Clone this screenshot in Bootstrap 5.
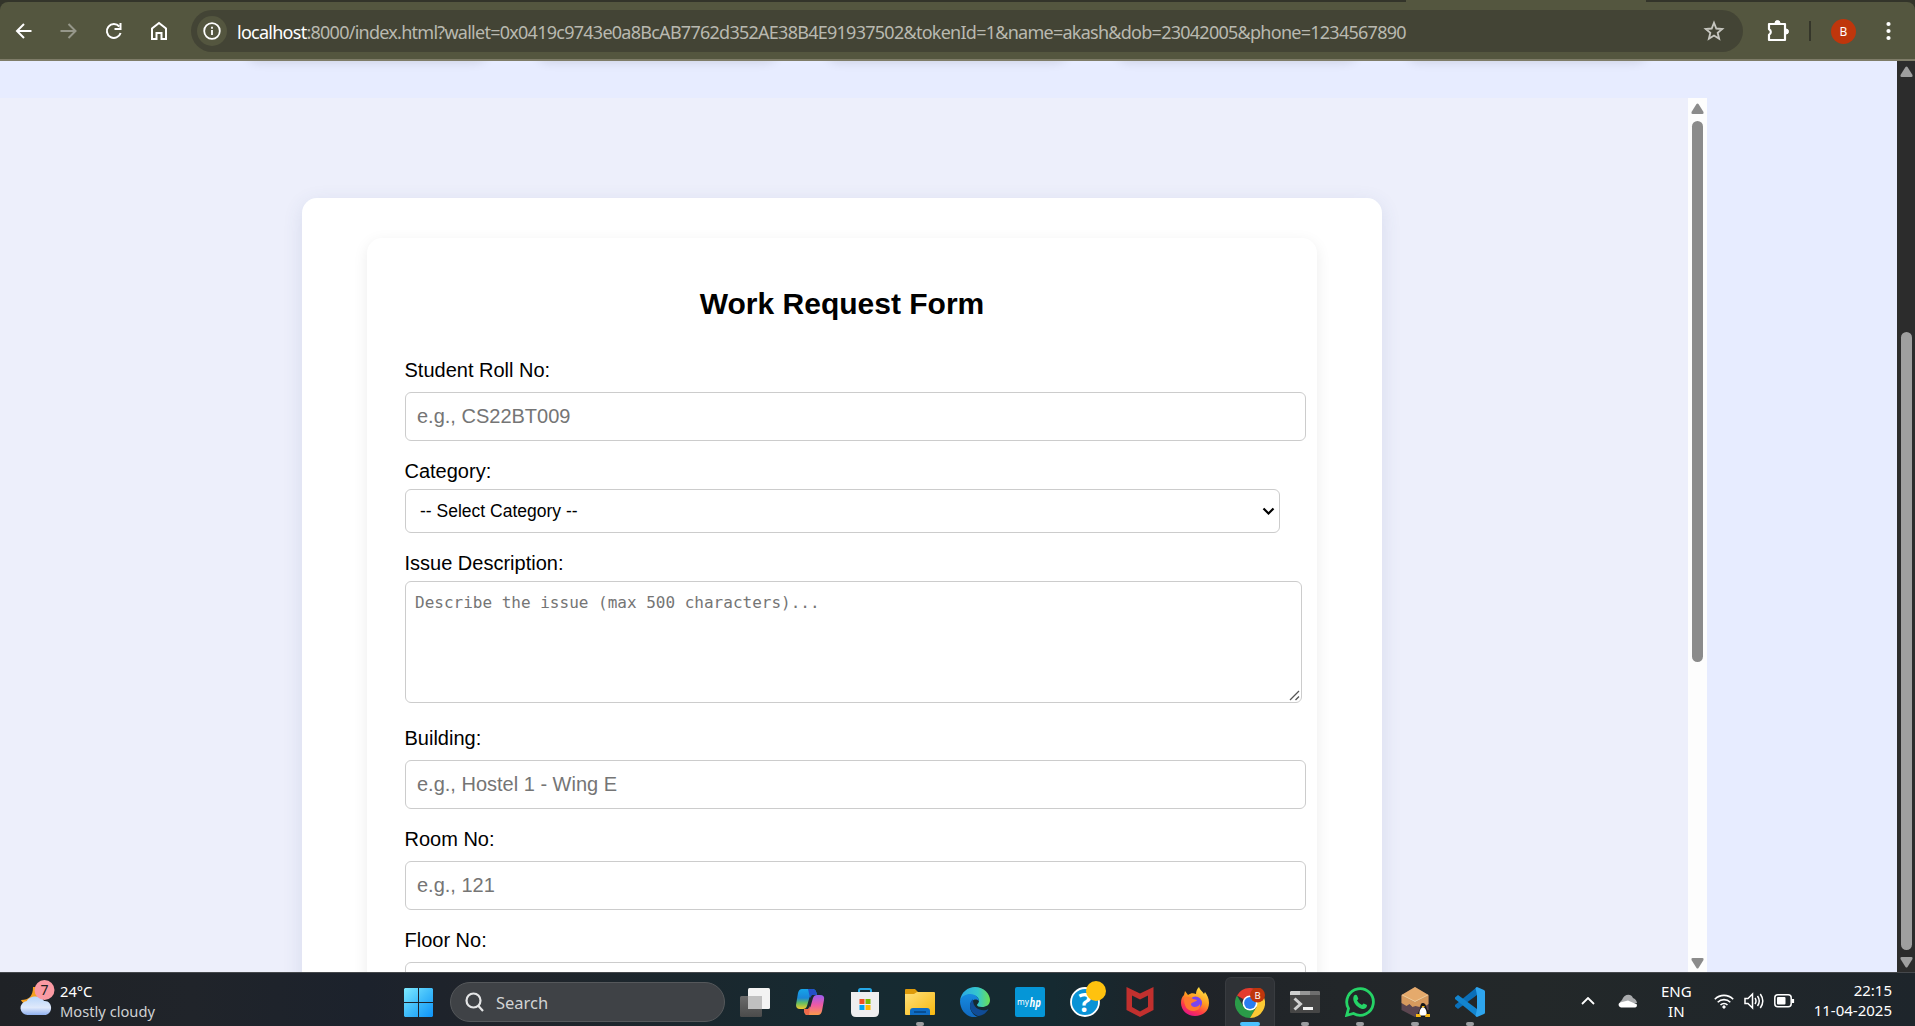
<!DOCTYPE html>
<html lang="en">
<head>
<meta charset="utf-8">
<title>Work Request Form</title>
<link href="https://cdn.jsdelivr.net/npm/bootstrap@5.3.0/dist/css/bootstrap.min.css" rel="stylesheet">
<script src="https://cdn.jsdelivr.net/npm/bootstrap@5.3.0/dist/js/bootstrap.bundle.min.js"></script>
<style>
html,body{height:100%;overflow:hidden}
body{font-family:"Liberation Sans",Arial,sans-serif;font-size:20px;line-height:23px;color:#000;background:#e7ecff}
svg{display:block;flex:none}
.ui-font{font-family:"Noto Sans","Open Sans",sans-serif}
/* browser chrome */
.tab-edge{height:2px;background:#33342a}
.tab-live{height:2px;width:240px;margin-left:1406px;background:#54563f}
.toolbar{height:59px;background:#54563f;border-bottom:2px solid #7e7c68;padding:7px 14px 6px 14px}
.strip{background:#33342a}
.toolbar-wrap{border-radius:8px 8px 0 0;overflow:hidden}
.nav-gap{margin-left:25px}
.omnibox{width:1552px;height:42px;border-radius:21px;background:#434435;margin-left:22px;padding:0 18px 0 6px}
.info-dot{width:30px;height:30px;background:#54563f}
.url{font-size:18px;letter-spacing:-.74px;color:#b9b9b0;margin-left:10px;white-space:nowrap;line-height:30px;padding-top:1px}
.url b{font-weight:400;color:#fff}
.sep{width:2px;height:20px;background:#35362a;margin-left:19px}
.avatar{width:25px;height:25px;background:#bf360c;color:#fff;font-size:12px;margin-left:20px}
/* page */
.viewport-area{height:911px}
.page-body{width:1897px}
.band{height:37px;overflow:hidden;padding-left:247px;gap:50px}
.tile{width:240px;height:30px;margin-top:-35px;background:#fff;border-radius:12px;box-shadow:0 5px 12px rgba(0,0,0,.14);flex:none}
.frame{width:1688px;height:874px;overflow:hidden;background:#edeffb}
.outer-card{width:1080px;height:900px;margin:100px 0 0 302px;padding:40px 65px;background:#fff;border-radius:15px;box-shadow:0 5px 20px rgba(60,80,130,.12)}
.inner-card{height:900px;background:#fff;border-radius:15px;padding:49px 11px 0 38px;box-shadow:0 4px 15px rgba(0,0,0,.08)}
.form-title{font-size:30px;line-height:34px;font-weight:700;margin:0 27px 38px 0}
.fld-label{display:block;height:23px;margin:0;text-indent:-.5px}
.fld{border:1px solid #ccc;border-radius:6px;font-size:20px;line-height:23px;color:#000;background:#fff;display:block;padding:12px}
.fld::placeholder{color:#757575;opacity:1}
.in-text{width:901px;height:49px;margin:10px 0 19px;padding-left:11px}
.in-select{width:875px;height:44px;margin:6px 0 19px;padding:0 4px 0 14px;font-size:17.5px}
.area-wrap{width:897px;margin:6px 0 24px}
.in-area{width:897px;height:122px;padding:11px 9px;font-family:"DejaVu Sans Mono",monospace;font-size:16px;line-height:20px;resize:none}
.grip{right:2px;bottom:2px}
.rail{background:#fdfdfd;width:19px;height:874px;padding:5px 0 3px}
.rail-thumb{width:11px;border-radius:6px;background:#8b8b8b}
.rail-main{background:#2c2c2c;width:18px;height:911px;padding:5px 0 4px}
.rail-main .rail-thumb{background:#9f9f9f;height:618px;margin-top:255px}
.rail .rail-thumb{height:541px;margin-top:7px}
/* taskbar */
.taskbar{height:54px;border-top:1px solid #45484c;background:linear-gradient(90deg,#1f2226 0,#20242a 10%,#1c222c 19%,#20242a 27%,#162a31 44%,#152a31 55%,#1f2328 62%,#222629 70%,#232829 80%,#1e252b 100%);color:#fff;font-size:15px;line-height:20px}
.weather{width:404px;padding-left:19px}
.weather-text{margin-left:5px;padding-top:8px;font-size:14.7px}
.dim{color:#cfd1d3}
.search-pill{width:275px;height:40px;margin:9px 0 0 17px;border-radius:20px;background:#3f4246;border:1px solid #55585b;padding-left:14px;font-size:16.500px;color:#d2d3d4}
.search-pill span{margin-left:12px;padding-top:1px}
.task{width:55px;height:53px;padding-top:14px}
.task i{display:block;width:8px;height:4px;border-radius:2px;background:#9b9da0;margin-top:5px}
.task-on{width:50px;height:49px;margin:4px 2.5px 0;padding-top:10px;background:#2f3236;border:1px solid #393c40;border-bottom:0;border-radius:6px 6px 0 0}
.task-on i{width:20px;background:#4cc2ff;margin-top:4px}
.tray{margin-left:auto;padding:2px 23px 0 0}
.lang{margin:0 0 0 23px}
.clock{margin:-1px 0 0 19px}
</style>
</head>
<body>
<div class="strip">
 <div class="tab-edge"><div class="tab-live"></div></div>
 <div class="toolbar-wrap">
 <header class="toolbar d-flex align-items-center ui-font">
  <svg width="20" height="20" viewBox="0 0 20 20" fill="none" stroke="#fff" stroke-width="2"><path d="M17.500 10H3.500M10 3L3 10l7 7"/></svg>
  <svg class="nav-gap" width="20" height="20" viewBox="0 0 20 20" fill="none" stroke="#96978a" stroke-width="2"><path d="M1.500 10h14M9.500 3l7 7-7 7"/></svg>
  <svg class="nav-gap" width="20" height="20" viewBox="0 0 20 20" fill="none" stroke="#fff" stroke-width="2"><path d="M15.300 5.500A7 7 0 1 0 16.600 12"/><path d="M16.500 2v6h-6" /></svg>
  <svg class="nav-gap" width="20" height="20" viewBox="0 0 20 20" fill="none" stroke="#fff" stroke-width="2"><path d="M3 18V7.500L10 2l7 5.500V18h-4.500v-6h-5v6z"/></svg>
  <div class="omnibox d-flex align-items-center">
   <div class="info-dot rounded-circle d-flex align-items-center justify-content-center"><svg width="18" height="18" viewBox="0 0 18 18" fill="none" stroke="#fff" stroke-width="1.800"><circle cx="9" cy="9" r="7.800"/><path d="M9 8v5M9 4.800v2"/></svg></div>
   <div class="url"><b>localhost</b>:8000/index.html?wallet=0x0419c9743e0a8BcAB7762d352AE38B4E91937502&amp;tokenId=1&amp;name=akash&amp;dob=23042005&amp;phone=1234567890</div>
   <svg class="ms-auto" width="22" height="22" viewBox="0 0 24 24" fill="none" stroke="#c6c6bf" stroke-width="2"><path d="M12 3l2.500 6.300 6.500.5-5 4.200 1.600 6.500L12 17l-5.600 3.500L8 14 3 9.800l6.500-.5z"/></svg>
  </div>
  <svg style="margin-left:23px" width="24" height="24" viewBox="0 0 24 24" fill="none" stroke="#fff" stroke-width="2.200" stroke-linejoin="round"><path d="M3 5h16v16H3v-5.300a3 3 0 0 0 0-5.500z"/><path d="M9 4a2.500 2.500 0 0 1 5 0zM20 10a2.500 2.500 0 0 1 0 5z" fill="#fff" stroke-width="1"/></svg>
  <div class="sep"></div>
  <div class="avatar rounded-circle d-flex align-items-center justify-content-center">B</div>
  <svg style="margin-left:27px" width="12" height="22" fill="#fff"><circle cx="5.500" cy="4" r="2.100"/><circle cx="5.500" cy="11" r="2.100"/><circle cx="5.500" cy="18" r="2.100"/></svg>
 </header>
 </div>
</div>

<div class="viewport-area d-flex">
 <div class="page-body">
  <div class="band d-flex"><div class="tile"></div><div class="tile"></div><div class="tile"></div><div class="tile"></div><div class="tile"></div></div>
  <div class="d-flex">
   <div class="frame d-flex align-items-start">
    <main class="outer-card">
     <form class="inner-card">
      <h2 class="form-title text-center">Work Request Form</h2>
      <label class="fld-label">Student Roll No:</label>
      <input class="fld in-text" placeholder="e.g., CS22BT009">
      <label class="fld-label">Category:</label>
      <div class="fld in-select d-flex align-items-center justify-content-between"><span>-- Select Category --</span><svg width="13" height="10" fill="none" stroke="#000" stroke-width="2.200"><path d="M1.500 2.500l5 5 5-5"/></svg></div>
      <label class="fld-label">Issue Description:</label>
      <div class="area-wrap position-relative">
       <textarea class="fld in-area" placeholder="Describe the issue (max 500 characters)..."></textarea>
       <svg class="grip position-absolute" width="11" height="11" fill="none" stroke="#555" stroke-width="1.300"><path d="M1 10l9-9M6.500 10L10 6.500"/></svg>
      </div>
      <label class="fld-label">Building:</label>
      <input class="fld in-text" placeholder="e.g., Hostel 1 - Wing E">
      <label class="fld-label">Room No:</label>
      <input class="fld in-text" placeholder="e.g., 121">
      <label class="fld-label">Floor No:</label>
      <input class="fld in-text">
     </form>
    </main>
   </div>
   <div class="rail d-flex flex-column align-items-center">
    <svg width="13" height="11" fill="#8b8b8b"><path d="M5.500 1q1-1 2 0l5 8q.5 2-1 2h-10q-1.500 0-1-2z"/></svg>
    <div class="rail-thumb"></div>
    <svg class="mt-auto" width="13" height="11" fill="#8b8b8b"><path d="M5.500 10q1 1 2 0l5-8q.5-2-1-2h-10q-1.500 0-1 2z"/></svg>
   </div>
  </div>
 </div>
 <div class="rail-main d-flex flex-column align-items-center">
  <svg width="13" height="11" fill="#9f9f9f"><path d="M5.500 1q1-1 2 0l5 8q.5 2-1 2h-10q-1.500 0-1-2z"/></svg>
  <div class="rail-thumb"></div>
  <svg class="mt-auto" width="13" height="11" fill="#9f9f9f"><path d="M5.500 10q1 1 2 0l5-8q.5-2-1-2h-10q-1.500 0-1 2z"/></svg>
 </div>
</div>

<footer class="taskbar d-flex ui-font">
 <div class="weather d-flex">
  <svg width="36" height="44" viewBox="0 0 36 44">
   <defs><linearGradient id="cl" x2="0" y2="1"><stop stop-color="#b9d6fa"/><stop offset=".6" stop-color="#dfe9fb"/><stop offset="1" stop-color="#8fb0f0"/></linearGradient></defs>
   <path d="M14 14c0 9-4 13-12 13 2 5 12 8 18 3V14z" fill="#f5a01f"/>
   <path d="M9 42a7 7 0 0 1-1-14c1-5 14-7 17 0 9-1 10 14 0 14z" fill="url(#cl)"/>
   <circle cx="25.500" cy="17" r="10" fill="#fb9aa3"/><text x="25.500" y="22" font-size="14" text-anchor="middle" fill="#222">7</text>
  </svg>
  <div class="weather-text"><div>24°C</div><div class="dim">Mostly cloudy</div></div>
 </div>
 <svg style="margin-top:15px" width="29" height="29"><defs><linearGradient id="wn" x2="1" y2="1"><stop stop-color="#7eeaff"/><stop offset=".5" stop-color="#3fbcfa"/><stop offset="1" stop-color="#0e93f8"/></linearGradient></defs><path fill="url(#wn)" d="M1 0h13v14H0V1zM15 0h13l1 1v13H15zM0 15h14v14H1l-1-1zM15 15h14v13l-1 1H15z"/></svg>
 <div class="search-pill d-flex align-items-center">
  <svg width="19" height="20" fill="none" stroke="#e4e5e6" stroke-width="2.200"><circle cx="8.500" cy="8.500" r="7"/><path d="M13 13.500l5 5.500"/></svg><span>Search</span>
 </div>
 <div class="d-flex" style="margin-left:2px">
  <div class="task d-flex flex-column align-items-center"><svg width="30" height="30"><defs><linearGradient id="tv" x2="0" y2="1"><stop stop-color="#6b6b6b"/><stop offset="1" stop-color="#4b4b4b"/></linearGradient></defs><rect y="9" width="22" height="21" rx="1.500" fill="url(#tv)"/><rect x="8" y="1" width="22" height="21" rx="1.500" fill="#f3f3f3"/><path d="M8 9h14v13H8z" fill="#c0c0c0"/></svg></div>
  <div class="task d-flex flex-column align-items-center"><svg width="30" height="30" viewBox="0 0 30 30"><defs><linearGradient id="c1" x2="0" y2="1"><stop stop-color="#16a5e8"/><stop offset=".45" stop-color="#1a86d8"/><stop offset=".7" stop-color="#65bf60"/><stop offset="1" stop-color="#f3c92c"/></linearGradient><linearGradient id="c2" x2="0" y2="1"><stop stop-color="#9a5df0"/><stop offset=".5" stop-color="#ee5aa5"/><stop offset="1" stop-color="#fa9a4a"/></linearGradient></defs><path d="M7 2h11q3 0 4 6h-5q-2 0-3 4l-2 7q-1 3-4 3H5q-4 0-4-4l2-12q1-4 4-4z" fill="url(#c1)"/><path d="M23 28H12q-3 0-3-6h4q2 0 3-4l2-7q1-3 4-3h3q5 0 4 5l-2 11q-1 4-4 4z" fill="url(#c2)"/><path d="M13 2h5q3 0 4 6h-5l-2 3z" fill="#2450c8"/><path d="M9 22h4l2-3-1 9h-2q-3-1-3-6z" fill="#f06a4a"/></svg></div>
  <div class="task d-flex flex-column align-items-center"><svg width="30" height="30"><path d="M9 7V3.500Q9 2 10.500 2h9Q21 2 21 3.500V7" fill="none" stroke="#26a9e8" stroke-width="2"/><path d="M1 5h28v20q0 5-5 5H6q-5 0-5-5z" fill="#eeeeef"/><path d="M9.500 12h5v5h-5z" fill="#f04f22"/><path d="M15.500 12h5v5h-5z" fill="#7db900"/><path d="M9.500 18h5v5h-5z" fill="#00a3ee"/><path d="M15.500 18h5v5h-5z" fill="#ffb800"/></svg></div>
  <div class="task d-flex flex-column align-items-center"><svg width="30" height="30"><defs><linearGradient id="fd" x2="1" y2="1"><stop stop-color="#ffe07a"/><stop offset="1" stop-color="#f7b80f"/></linearGradient></defs><path d="M0 3q0-1 1-1h9l3 3-3 3H0z" fill="#dd9a0a"/><path d="M0 7h9l3-2h17q1 0 1 1v21q0 1-1 1H1q-1 0-1-1z" fill="url(#fd)"/><path d="M5 28v-4q0-3 3-3h14q3 0 3 3v4z" fill="#0f6cc4"/><path d="M9 25h12" stroke="#06427f" stroke-width="1.500"/></svg><i></i></div>
  <div class="task d-flex flex-column align-items-center"><svg width="30" height="30" viewBox="0 0 30 30"><defs><linearGradient id="e1"><stop stop-color="#2aa7e6"/><stop offset=".6" stop-color="#35c7cc"/><stop offset="1" stop-color="#6be053"/></linearGradient><linearGradient id="e2" x2="0" y2="1"><stop stop-color="#168be0"/><stop offset="1" stop-color="#1068c0"/></linearGradient></defs><path d="M0 14C1 5 8 0 15 0c9 0 15 7 15 13 0 5-4 7-8 7-3 0-5-1-5-2 0-1 2-2 2-4 0-4-4-6-8-6-5 0-9 2-11 6z" fill="url(#e1)"/><path d="M0 14c1-5 6-7 10-7 6 0 9 4 9 7-2-3-9-2-9 5 0 5 4 10 8 11C8 32 0 24 0 14z" fill="url(#e2)"/><path d="M13 12c-5 4-4 14 5 17 5 0 9-4 10.500-7-5 3-16 1-15.500-10z" fill="#104c96"/></svg></div>
  <div class="task d-flex flex-column align-items-center"><svg width="30" height="30" overflow="visible"><rect width="30" height="30" rx="2" fill="#0596d7"/><text x="2" y="18" font-size="8.500" fill="#fff" textLength="12" lengthAdjust="spacingAndGlyphs">my</text><text x="14.500" y="19.500" font-size="13" font-weight="700" font-style="italic" fill="#fff" textLength="11.500" lengthAdjust="spacingAndGlyphs">hp</text></svg></div>
  <div class="task d-flex flex-column align-items-center"><svg width="30" height="30" overflow="visible"><circle cx="15" cy="15" r="14" fill="#0a93d6" stroke="#fff" stroke-width="1.800"/><text x="15" y="25" text-anchor="middle" font-size="27" font-weight="700" fill="#fff">?</text><circle cx="26" cy="4" r="10" fill="#ffc20e"/></svg></div>
  <div class="task d-flex flex-column align-items-center"><svg width="30" height="30"><path d="M1.500 0L15 6.500 28.500 0v23L15 30 1.500 23zM7 8.500v11.500l8 4.500 8-4.500V8.500l-8 4z" fill="#c1302e" fill-rule="evenodd"/></svg></div>
  <div class="task d-flex flex-column align-items-center"><svg width="30" height="30" viewBox="0 0 30 30"><defs><linearGradient id="ff" x1=".8" y1="0" x2=".3" y2="1"><stop stop-color="#ffe94a"/><stop offset=".45" stop-color="#ff9a1f"/><stop offset=".75" stop-color="#ff3b47"/><stop offset="1" stop-color="#e3128b"/></linearGradient></defs><path d="M16 7c0-3 1-5 3-7 1 3 3 4 5 7l1-2c2 3 4 6 4 11 0 8-6 13-14 13S1 23 1 16c0-4 1-6 3-8l1-4 3 4c3-2 5-2 8-1z" fill="url(#ff)"/><circle cx="15.500" cy="16" r="6.500" fill="#7a45f0"/><path d="M4 12c3-3 7-2 9 0l4 1c-1 2-5 2-6 4 0 4 7 4 9 0 1 5-3 7-7 7-6 0-9-5-9-12z" fill="#ff7a2e"/></svg></div>
  <div class="task task-on d-flex flex-column align-items-center"><svg width="30" height="30" viewBox="0 0 30 30"><path d="M15 15L2 7.500A15 15 0 0 1 28 7.500H15z" fill="#e33b2e"/><path d="M15 15l6.500 3.700L15 30A15 15 0 0 1 2 7.500l6.500 11.200z" fill="#2a9b48"/><path d="M15 15V7.500h13A15 15 0 0 1 15 30l6.500-11z" fill="#fcc934"/><circle cx="15" cy="15" r="7.500" fill="#fff"/><circle cx="15" cy="15" r="5.900" fill="#2a7df0"/><circle cx="22.500" cy="7" r="7.500" fill="#bf360c"/><text x="22.500" y="10.500" text-anchor="middle" font-size="9.500" fill="#fff">B</text></svg><i></i></div>
  <div class="task d-flex flex-column align-items-center"><svg width="30" height="30"><rect y="4" width="30" height="22" rx="1" fill="#464646"/><path d="M0 8V5l1-1h9v4z" fill="#cfcfcf"/><path d="M10 4h10v4H10z" fill="#969696"/><path d="M20 4h9l1 1v3H20z" fill="#6e6e6e"/><path d="M4.500 11.500l6 5.500-6 5.500" fill="none" stroke="#d0d0d0" stroke-width="3"/><path d="M13 20h10v3H13z" fill="#f2f2f2"/></svg><i></i></div>
  <div class="task d-flex flex-column align-items-center"><svg width="30" height="30" viewBox="0 0 30 30"><path d="M1.700 28.300l1.800-6.800A13.300 13.300 0 1 1 8.500 26.500z" fill="none" stroke="#25d366" stroke-width="2.800"/><path d="M9 8.500q2-1.500 3 0l1.300 3q0 1-1.300 2 1.500 3 5 4.500l1.500-1.500q1 0 3.500 1.500 0 3.500-3.500 4C13 22 6 14.500 9 8.500z" fill="#25d366"/></svg><i></i></div>
  <div class="task d-flex flex-column align-items-center"><svg width="30" height="30" viewBox="0 0 30 30"><path d="M15 0l13.500 8v15L15 30 1.500 23V8z" fill="#5c4650"/><path d="M15 0l13.500 8L15 15 1.500 8z" fill="#e5aa6c"/><path d="M1.500 8L15 15l13.500-7v9l-3 2-3-3-3 4-4-1-3 1-3-3-3 2-5-3z" fill="#d79a5e"/><path d="M2 8l13 6.500L28 8" fill="none" stroke="#f7d9a8" stroke-width=".8"/><path d="M23 16c3 0 3 4 4 6l2 6-3 2h-6l-3-2 3-6c1-3 0-6 3-6z" fill="#151515"/><path d="M23 20c3 1 4 5 3.500 8.500h-7c-.5-3.500.500-7.500 3.500-8.500z" fill="#fff"/><path d="M16 27h4l1 3h-5zM26 27h4v3h-5zM21.500 19h3.500l-1.800 2z" fill="#f6b712"/></svg><i></i></div>
  <div class="task d-flex flex-column align-items-center"><svg width="30" height="30" viewBox="0 0 30 30"><path d="M22 0v8L3 22l-3-2.500V18z" fill="#0a6fb8"/><path d="M3 8l19 14v8L0 12v-1.500z" fill="#1385cf"/><path d="M22 0l7 3q1 .5 1 1.500v21q0 1-1 1.500l-7 3-1.500-1 1.500-7V8L20.500 1z" fill="#2ea5ee"/></svg><i></i></div>
 </div>
 <div class="tray d-flex align-items-center">
  <svg width="14" height="8" fill="none" stroke="#fff" stroke-width="1.800"><path d="M1 7l6-6 6 6"/></svg>
  <svg style="margin-left:23px" width="20" height="14"><path d="M4 13a4 4 0 0 1 0-7C6 0 13-1 15 4c3 1 4 4 4 5z" fill="#a9abad"/><path d="M3 13.500c-3-1-3-4-1-5l8-2 9 4q0 3-2 3z" fill="#fff"/></svg>
  <div class="lang text-center"><div>ENG</div><div>IN</div></div>
  <svg style="margin-left:22px" width="20" height="16" fill="none" stroke="#fff" stroke-width="1.600"><path d="M.8 6.200a13 13 0 0 1 18.400 0M3.700 9.200a9 9 0 0 1 12.600 0M6.500 12a5 5 0 0 1 7 0"/><circle cx="10" cy="14" r="1.200" fill="#fff" stroke-width="1"/></svg>
  <svg style="margin-left:10px" width="21" height="18" fill="none" stroke="#fff" stroke-width="1.500"><path d="M1 6.500h3L8.500 2v14L4 11.500H1zM11 6q2 3 0 6M13.500 4q3.500 5 0 10M16.300 2q5 7 0 14"/></svg>
  <svg style="margin-left:9px" width="21" height="14" fill="none" stroke="#fff" stroke-width="1.500"><rect x=".8" y=".8" width="16.400" height="12" rx="3"/><path d="M19 5v4" stroke-width="2.200"/><rect x="3" y="3" width="8.500" height="7.600" rx="1" fill="#fff" stroke="none"/></svg>
  <div class="clock text-end"><div>22:15</div><div>11-04-2025</div></div>
 </div>
</footer>
</body>
</html>
